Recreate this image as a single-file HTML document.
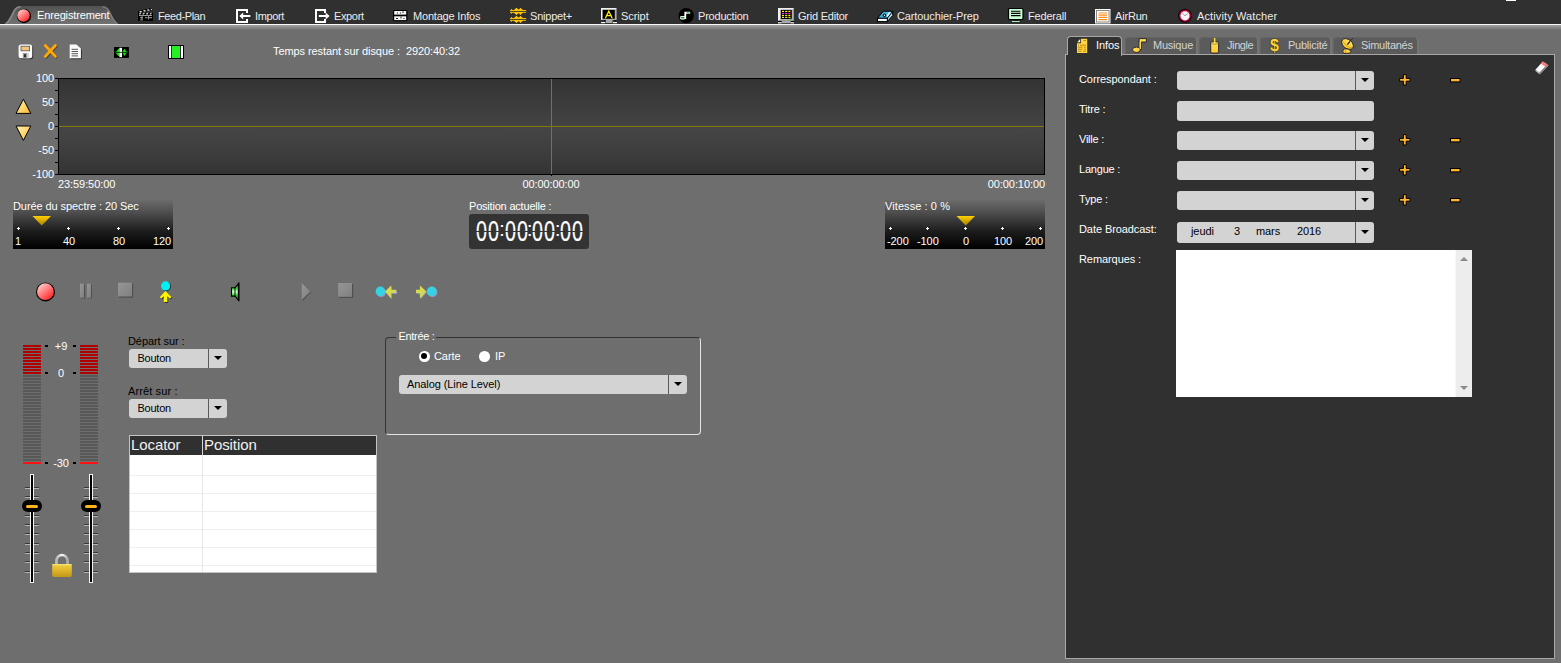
<!DOCTYPE html>
<html lang="fr">
<head>
<meta charset="utf-8">
<title>Enregistrement</title>
<style>
*{box-sizing:border-box;margin:0;padding:0}
html,body{width:1561px;height:663px;overflow:hidden}
body{letter-spacing:-.08px;background:#6e6e6e;font-family:"Liberation Sans",Arial,sans-serif;font-size:11px;color:#fff;position:relative}
.abs{position:absolute}
svg{position:absolute;overflow:visible}
.t{position:absolute;white-space:nowrap;line-height:13px;height:13px}
.k{color:#000}
.c{text-align:center}
.r{text-align:right}
#topbar{position:absolute;left:0;top:0;width:1561px;height:24px;background:#303030}
#topline{position:absolute;left:0;top:24px;width:1561px;height:1px;background:#f8f8f8}
#topshade{position:absolute;left:0;top:25px;width:1561px;height:5px;background:linear-gradient(#a4a4a4,#6e6e6e)}
.mt{position:absolute;top:10px;white-space:nowrap;line-height:13px;color:#ececec}
.cb{position:absolute;height:19px;background:#d3d3d3;border-radius:3px;color:#000}
.cb i{position:absolute;right:18px;top:0;width:1px;height:100%;background:#5a5a5a}
.cb b{position:absolute;right:5px;top:7px;width:0;height:0;border:4px solid transparent;border-top:4.5px solid #000;border-bottom:0}
.cb span{position:absolute;left:9px;top:3px;line-height:13px;white-space:nowrap}
.sl{position:absolute;width:160px;height:50px;top:199px;background:linear-gradient(#6e6e6e,#4a4a4a 30%,#1c1c1c 65%,#000)}
.dot{position:absolute;width:3px;height:3px;top:28px}
.dot:before{content:"";position:absolute;left:1px;top:0;width:1px;height:3px;background:#fff}
.dot:after{content:"";position:absolute;left:0;top:1px;width:3px;height:1px;background:#fff}
.sl .t{top:36px}
.dg{-webkit-text-stroke:.2px #fff;position:absolute;top:214.800px;font-size:29px;line-height:32px;letter-spacing:1.550px;transform-origin:0 0;transform:scaleX(.68)}
.cl{position:absolute;top:214.600px;font-size:21px;line-height:28px;letter-spacing:0}
.tk{position:absolute;background:#000;height:1px}
.vu{position:absolute;width:18px;top:345px;height:30px;background:repeating-linear-gradient(#b00000 0,#b00000 2px,#6e6e6e 2px,#6e6e6e 3px)}
.vg{position:absolute;width:18px;top:375px;height:87px;background:repeating-linear-gradient(#585858 0,#585858 2px,#6e6e6e 2px,#6e6e6e 3px)}
.vr{position:absolute;width:18px;top:462px;height:2px;background:#ff1010}
.sq{position:absolute;width:3px;height:2px;background:#000}
.ftr{position:absolute;width:4px;top:474px;height:109px;background:#000;border:1px solid #f4f4f4}
.ftk{position:absolute;width:14px;height:2px;background:linear-gradient(#383838 50%,#b4b4b4 50%)}
.knob{position:absolute;width:20px;height:12px;top:500px;border-radius:6px;background:#000}
.knob:after{content:"";position:absolute;left:4px;top:5px;width:12px;height:3px;border-radius:1.500px;background:#ffb420}
#tbl{position:absolute;left:129px;top:435px;width:248px;height:138px;background:#fff;border:1px solid #c4c4c4}
#tbl .h{position:absolute;left:0;top:0;width:246px;height:19px;background:#303030}
#tbl .ln{position:absolute;left:0;width:246px;height:1px;background:#eeeeee}
.pt{position:absolute;top:37px;height:18px;background:#5b5b5b;border-radius:4px 4px 0 0;box-shadow:inset 1px 1px 0 #646464,2px 0 0 #747474}
.lb{position:absolute;left:1079px;white-space:nowrap;line-height:13px}
.pm{position:absolute;font-weight:bold}
</style>
</head>
<body>
<div id="topbar"></div>
<div id="topline"></div>
<div id="topshade"></div>
<div class="abs" style="left:1506px;top:0;width:10px;height:1px;background:#fff"></div>

<!-- MAIN TABS -->
<svg style="left:4px;top:6px" width="115" height="18" viewBox="0 0 115 18"><defs><linearGradient id="tg" x1="0" y1="0" x2="0" y2="1"><stop offset="0" stop-color="#525252"/><stop offset="1" stop-color="#727272"/></linearGradient></defs><path d="M0 18 C4 17 6 11 9 5 Q11.500 0 16.500 0 L98.500 0 Q103.500 0 106 5 C109 11 111 17 115 18 Z" fill="url(#tg)"/><path d="M1.500 17.500 C5 16.500 7 11 10 5.500 Q12 1.200 16.500 .8" fill="none" stroke="#9a9a9a" stroke-width="1.600" opacity=".75"/><path d="M113.500 17.500 C110 16.500 108 11 105 5.500 Q103 1.200 98.500 .8" fill="none" stroke="#8c8c8c" stroke-width="1.600" opacity=".6"/></svg>
<svg style="left:14px;top:6px" width="20" height="20" viewBox="0 0 20 20"><defs><linearGradient id="rg" x1=".15" y1=".1" x2=".85" y2=".95"><stop offset="0" stop-color="#ffc8c8"/><stop offset=".5" stop-color="#ff7474"/><stop offset="1" stop-color="#ff2020"/></linearGradient></defs><circle cx="10" cy="10" r="7.2" fill="#000"/><circle cx="9.5" cy="9.5" r="6.2" fill="url(#rg)"/></svg>
<div class="mt" style="left:37px;top:9px;color:#fff;letter-spacing:-0.15px">Enregistrement</div>

<!-- feed-plan clapper -->
<svg style="left:138px;top:8px" width="16" height="14" viewBox="0 0 16 14"><rect x="0" y="4.500" width="15" height="8.500" fill="#000"/><path d="M0 4.800 L0 3 L13.600 0 L14.600 2 L1 4.800Z" fill="#000"/><path d="M1.200 3.300 L3.200 2.900 L4.200 4 L2.200 4.400Z M5 2.500 L7 2.100 L8 3.200 L6 3.600Z M8.800 1.700 L10.800 1.300 L11.800 2.400 L9.800 2.800Z M12.400 .9 L13.600 .7 L14.100 1.800 L13.200 2Z" fill="#f4f4f4"/><path d="M1.600 4.800 H3.400 L2.400 6.600 H.8Z M5.200 4.800 H7 L6 6.600 H4.200Z M8.800 4.800 H10.600 L9.600 6.600 H7.800Z M12.400 4.800 H14 L13 6.600 H11.400Z" fill="#c8c8c8"/><rect x="1" y="7" width="13" height="1" fill="#9a9a9a"/><rect x="2" y="9.200" width="3" height="1" fill="#aaa"/><rect x="7" y="9.200" width="2.500" height="1" fill="#aaa"/><rect x="11" y="9.200" width="3" height="1" fill="#aaa"/><rect x="3.500" y="7" width="1" height="5" fill="#909090"/><rect x="10" y="7" width="1" height="4.500" fill="#909090"/><rect x="2" y="11.400" width="3" height="1" fill="#888"/></svg>
<div class="mt" style="left:158px;letter-spacing:-0.4px">Feed-Plan</div>
<!-- import -->
<svg style="left:236px;top:9px" width="15" height="14" viewBox="0 0 15 14"><path d="M11 4 V1 H1 V13 H11 V10" fill="none" stroke="#fff" stroke-width="2"/><path d="M3.3 7 L7.2 3.6 V5.9 H14.3 V8.1 H7.2 V10.4Z" fill="#fff"/></svg>
<div class="mt" style="left:255px;letter-spacing:-0.36px">Import</div>
<!-- export -->
<svg style="left:315px;top:9px" width="15" height="14" viewBox="0 0 15 14"><path d="M10 4 V1 H1 V13 H10 V10" fill="none" stroke="#fff" stroke-width="2"/><path d="M14.6 7 L10.7 3.6 V5.9 H3.8 V8.1 H10.7 V10.4Z" fill="#fff"/></svg>
<div class="mt" style="left:334px;letter-spacing:-0.36px">Export</div>
<!-- montage infos -->
<svg style="left:393px;top:10px" width="15" height="12" viewBox="0 0 15 12"><rect x="0" y="0" width="14.5" height="11.2" rx="1.5" fill="#000"/><rect x="1.200" y="1" width="12" height="3.600" fill="#f4f4f4"/><rect x="1.200" y="6.300" width="12" height="3.800" fill="#f4f4f4"/><path d="M4 2.5h1v1H4z M7 2.5h1v1H7z M9.5 1.3h1v1.6h-1z M3 8h2v1H3z M7.5 6.6h1v2h-1z M10.5 8h1v1h-1z" fill="#222"/></svg>
<div class="mt" style="left:413px;letter-spacing:-0.19px">Montage Infos</div>
<!-- snippet+ -->
<svg style="left:510px;top:8px" width="17" height="16" viewBox="0 0 17 16"><path d="M0.0 2.0 L0.8 2.0 L1.5 0.8 L2.3 2.0 L4.0 2.0 L5.0 1.0 L6.5 -0.2 L8.0 1.2 L9.0 1.6 L10.5 -0.2 L12.0 1.2 L13.0 2.0 L16.1 2.0 L16.1 4.8 L13.0 4.8 L12.0 5.6 L10.5 7.0 L9.0 5.2 L8.0 5.6 L6.5 7.0 L5.0 5.8 L4.0 4.8 L2.3 4.8 L1.5 6.0 L0.8 4.8 L0.0 4.8Z" fill="#ffc800"/><rect x="0" y="2.95" width="16.100" height=".9" fill="#3a3420"/><path d="M0.0 10.0 L0.8 10.0 L1.5 8.8 L2.3 10.0 L4.0 10.0 L5.0 9.0 L6.5 7.8 L8.0 9.2 L9.0 9.6 L10.5 7.8 L12.0 9.2 L13.0 10.0 L16.1 10.0 L16.1 12.8 L13.0 12.8 L12.0 13.6 L10.5 15.0 L9.0 13.2 L8.0 13.6 L6.5 15.0 L5.0 13.8 L4.0 12.8 L2.3 12.8 L1.5 14.0 L0.8 12.8 L0.0 12.8Z" fill="#ffc800"/><rect x="0" y="10.95" width="16.100" height=".9" fill="#3a3420"/></svg>
<div class="mt" style="left:530px;letter-spacing:-0.21px">Snippet+</div>
<!-- script -->
<svg style="left:601px;top:8px" width="16" height="16" viewBox="0 0 16 16"><rect x="0" y="0" width="15.600" height="12" fill="#b0b0b0"/><path d="M0 0 H15.600 L13.800 1.800 H1.600 V10.800 L0 12Z" fill="#f2f2f2"/><rect x="1.600" y="1.800" width="12.200" height="9" fill="#000"/><path d="M4.600 9.800 L7.800 3.200 L11 9.800 M5.400 7.700 H10.200" fill="none" stroke="#ffee00" stroke-width="1.300" stroke-linecap="round"/><rect x="4.500" y="12" width="7" height="3" fill="#a8a8a8"/><rect x="0" y="14" width="4" height="1.200" fill="#f4f4f4"/><rect x="12" y="14" width="4" height="1.200" fill="#f4f4f4"/><rect x="3" y="12.400" width="2" height="1" fill="#000"/><rect x="13.500" y="12.400" width="2" height="1" fill="#000"/></svg>
<div class="mt" style="left:621px;letter-spacing:-0.08px">Script</div>
<!-- production -->
<svg style="left:678px;top:8px" width="16" height="16" viewBox="0 0 16 16"><circle cx="8.200" cy="7.700" r="7.600" fill="#000"/><path d="M6.400 3.800 H12.200 V5.800 H8.200 V11 H6.400Z" fill="#fff"/><rect x="2.200" y="8" width="5" height="3.400" rx="1" fill="#fff"/><rect x="3" y="8.900" width="3.400" height="1.500" fill="#00a030"/><rect x="8.600" y="4.300" width="3" height="1" fill="#00a030"/></svg>
<div class="mt" style="left:698px;letter-spacing:-0.21px">Production</div>
<!-- grid editor -->
<svg style="left:778px;top:8px" width="16" height="16" viewBox="0 0 16 16"><rect x="0" y="0" width="15.800" height="12.800" fill="#b0b0b0"/><path d="M0 0 H15.800 L13.800 2 H2.500 V11 L0 12.800Z" fill="#f0f0f0"/><rect x="2.800" y="1.800" width="11" height="9.200" fill="#000"/><g fill="#ffee00"><rect x="4" y="2.800" width="2" height="1.200"/><rect x="7.200" y="2.800" width="2" height="1.200"/><rect x="10.400" y="2.800" width="2" height="1.200"/><rect x="4" y="6.800" width="2" height="1.200"/><rect x="7.200" y="6.800" width="2" height="1.200"/><rect x="10.400" y="6.800" width="2" height="1.200"/><rect x="4" y="8.800" width="2" height="1.200"/><rect x="7.200" y="8.800" width="2" height="1.200"/><rect x="10.400" y="8.800" width="2" height="1.200"/></g><g fill="#ff20e0"><rect x="4" y="4.800" width="2" height="1.200"/><rect x="7.200" y="4.800" width="2" height="1.200"/><rect x="10.400" y="4.800" width="2" height="1.200"/></g><rect x="11.500" y="10.600" width="2" height="1" fill="#00d040"/><rect x="3.500" y="12.800" width="9" height="2.400" fill="#a8a8a8"/><rect x="0" y="14.200" width="3.500" height="1.200" fill="#f4f4f4"/><rect x="12.500" y="14.200" width="3.500" height="1.200" fill="#f4f4f4"/><rect x="0.500" y="13" width="3" height="1" fill="#000"/><rect x="13" y="13" width="3" height="1" fill="#000"/></svg>
<div class="mt" style="left:798px;letter-spacing:-0.23px">Grid Editor</div>
<!-- cartouchier -->
<svg style="left:877px;top:10px" width="17" height="13" viewBox="0 0 17 13"><path d="M6.300 1.200 H15.700 L10.300 8.300 H.5Z" fill="#38b0e0" stroke="#000" stroke-width="1"/><path d="M10.300 8.300 L15.700 1.200 V5.500 L10.300 11.600Z" fill="#a8e0f8" stroke="#000" stroke-width="1"/><rect x=".5" y="8.300" width="9.800" height="3.300" fill="#f4faff" stroke="#000" stroke-width="1"/><path d="M11.800 2.200 L14.300 2.200 L10.500 7 L9.200 6Z" fill="#e8f6ff"/><circle cx="7.500" cy="5.300" r="1.700" fill="#000"/><circle cx="7.500" cy="5.300" r=".8" fill="#fff"/></svg>
<div class="mt" style="left:897px;letter-spacing:-0.12px">Cartouchier-Prep</div>
<!-- federall -->
<svg style="left:1008px;top:8px" width="16" height="15" viewBox="0 0 16 15"><rect x=".5" y=".5" width="14.500" height="11" rx="1" fill="#c8ffd4" stroke="#000" stroke-width="1.200"/><path d="M3 3.200 H12.500 M3 5.400 H12.500 M3 7.600 H12.500" stroke="#000" stroke-width="1.100"/><rect x="5.500" y="11.500" width="4.500" height="1.500" fill="#000"/><rect x="3.500" y="12.800" width="8.500" height="1.400" fill="#c8ffd4" stroke="#000" stroke-width=".5"/></svg>
<div class="mt" style="left:1028px;letter-spacing:-0.18px">Federall</div>
<!-- airrun -->
<svg style="left:1095px;top:9px" width="16" height="15" viewBox="0 0 16 15"><rect x="0" y="0" width="15.500" height="14.500" fill="#fafafa"/><rect x="1.500" y="1.500" width="12.500" height="11.500" fill="#fff" stroke="#888" stroke-width="1"/><path d="M3.500 4 H12 M3.500 6.200 H12 M3.500 8.400 H12 M3.500 10.600 H12" stroke="#ff8a10" stroke-width="1.200"/></svg>
<div class="mt" style="left:1115px;letter-spacing:-0.18px">AirRun</div>
<!-- activity watcher -->
<svg style="left:1177px;top:8px" width="16" height="16" viewBox="0 0 16 16"><circle cx="8" cy="7.800" r="7" fill="#100008"/><circle cx="8" cy="7.800" r="6" fill="#b8003c"/><circle cx="8" cy="7.800" r="4.600" fill="#f6f6f6"/><path d="M5.200 5 L8 7.800 L10.800 5.500" fill="none" stroke="#999" stroke-width="1"/></svg>
<div class="mt" style="left:1197px;letter-spacing:0.12px">Activity Watcher</div>

<!-- TOOLBAR -->
<!-- save -->
<svg style="left:18px;top:44px" width="16" height="16" viewBox="0 0 16 16"><rect x="1.600" y="1.600" width="13.600" height="13.600" rx="2.500" fill="#2a2a2a" opacity=".85"/><rect x=".6" y=".6" width="13.600" height="13.600" rx="2.500" fill="#fcfcfc"/><rect x="3" y="2.200" width="8.600" height="4.600" fill="#f2c47c" stroke="#555" stroke-width=".8"/><rect x="4.800" y="9" width="6" height="5.200" fill="#9a9a9a"/><rect x="6.200" y="10.300" width="1.600" height="2.800" fill="#111"/><rect x="9" y="9" width="1.800" height="5.200" fill="#d8d8d8"/></svg>
<!-- X -->
<svg style="left:43px;top:43px" width="16" height="16" viewBox="0 0 16 16"><path d="M3.100 3.300 L13.200 14.200 M13.200 3.300 L3.100 14.200" stroke="#3a3a3a" stroke-width="2.800" stroke-linecap="round" opacity=".75"/><path d="M2.300 2.500 L12.400 13.400 M12.400 2.500 L2.300 13.400" stroke="#ffaa00" stroke-width="2.800" stroke-linecap="round"/></svg>
<!-- doc -->
<svg style="left:69px;top:44px" width="14" height="16" viewBox="0 0 14 16"><path d="M1.700 1.600 H8.500 L12.900 5.600 V15.200 H1.700Z" fill="#2a2a2a" opacity=".85"/><path d="M.7 .6 H7.500 L11.900 4.600 V14.200 H.7Z" fill="#fcfcfc"/><path d="M2.600 5.300 H9 M2.600 7.500 H9 M2.600 9.700 H9 M2.600 11.900 H9" stroke="#555" stroke-width="1"/></svg>
<!-- green arrows -->
<svg style="left:114px;top:47px" width="15" height="11" viewBox="0 0 15 11"><rect x="0" y="0" width="14.900" height="10.900" fill="#000"/><path d="M.6 5.300 L2.500 4.300 L4.400 1.800 L5.400 1.800 V9 L4.400 9 L2.500 6.400Z" fill="#1ee01e"/><path d="M8 5.300 L9 4 L10.500 1.800 L12 4 L14.200 5.300 L12 6.600 L10.500 9 L9 6.600Z" fill="#1ee01e"/><rect x="5.400" y=".8" width="2.600" height="9.300" fill="#fff"/><rect x=".3" y="4.900" width="14.300" height=".9" fill="#000" opacity=".85"/></svg>
<!-- green rect -->
<svg style="left:168px;top:45px" width="16" height="14" viewBox="0 0 16 14"><rect x="0" y="0" width="16" height="14" rx=".8" fill="#000"/><rect x="1" y="1" width="2.200" height="12" fill="#fff"/><rect x="12.800" y="1" width="2.200" height="12" fill="#fff"/><rect x="4" y="1" width="8" height="12" fill="#22f022"/></svg>
<div class="t" style="left:273px;top:45px">Temps restant sur disque :&nbsp; 2920:40:32</div>

<!-- up/down triangles -->
<svg style="left:15px;top:98px" width="18" height="44" viewBox="0 0 18 44"><defs><linearGradient id="yg" x1="0" y1="0" x2="1" y2="1"><stop offset="0" stop-color="#fff0b8"/><stop offset=".5" stop-color="#ffd870"/><stop offset="1" stop-color="#ffb830"/></linearGradient></defs><path d="M8.400 1.200 L15.800 15.400 H1Z" fill="url(#yg)" stroke="#000" stroke-width="1"/><path d="M1 28 H15.800 L8.400 42.400Z" fill="url(#yg)" stroke="#000" stroke-width="1"/></svg>

<!-- WAVEFORM -->
<div class="abs" style="left:58px;top:78px;width:987px;height:97px;border:1px solid #000;background:linear-gradient(#333,#3a3a3a 20%,#454545 55%,#3c3c3c 80%,#333)"></div>
<div class="abs" style="left:59px;top:126px;width:985px;height:1px;background:#857a00"></div>
<div class="abs" style="left:551px;top:79px;width:1px;height:95px;background:#857a00"></div>
<div class="abs" style="left:551px;top:175px;width:1px;height:1px;background:#000"></div>
<div class="t r" style="left:14px;width:40px;top:72px">100</div>
<div class="t r" style="left:14px;width:40px;top:96px">50</div>
<div class="t r" style="left:14px;width:40px;top:120px">0</div>
<div class="t r" style="left:14px;width:40px;top:144px">-50</div>
<div class="t r" style="left:14px;width:40px;top:168px">-100</div>
<div class="tk" style="left:55px;top:78px;width:3px"></div>
<div class="tk" style="left:55px;top:90px;width:3px"></div>
<div class="tk" style="left:55px;top:102px;width:3px"></div>
<div class="tk" style="left:55px;top:114px;width:3px"></div>
<div class="tk" style="left:55px;top:126px;width:3px"></div>
<div class="tk" style="left:55px;top:138px;width:3px"></div>
<div class="tk" style="left:55px;top:150px;width:3px"></div>
<div class="tk" style="left:55px;top:162px;width:3px"></div>
<div class="tk" style="left:55px;top:174px;width:3px"></div>
<div class="t" style="left:58px;top:178px">23:59:50:00</div>
<div class="t c" style="left:501px;width:100px;top:178px">00:00:00:00</div>
<div class="t r" style="left:945px;width:100px;top:178px">00:00:10:00</div>

<!-- spectrum slider -->
<div class="sl" style="left:13px">
<div class="t" style="left:0;top:1px">Durée du spectre : 20 Sec</div>
<svg style="left:19px;top:17px" width="20" height="10" viewBox="0 0 20 10"><defs><linearGradient id="gg" x1="0" y1="0" x2="0" y2="1"><stop offset="0" stop-color="#ffd000"/><stop offset="1" stop-color="#a88000"/></linearGradient></defs><path d="M.5 0 H19 L9.700 9.600Z" fill="url(#gg)"/></svg>
<div class="dot" style="left:4px"></div><div class="dot" style="left:54px"></div><div class="dot" style="left:104px"></div><div class="dot" style="left:154px"></div>
<div class="t c" style="left:-5px;width:20px">1</div>
<div class="t c" style="left:41px;width:30px">40</div>
<div class="t c" style="left:91px;width:30px">80</div>
<div class="t r" style="left:118px;width:40px">120</div>
</div>

<!-- position -->
<div class="t" style="left:469px;top:200px;letter-spacing:-.2px">Position actuelle :</div>
<div class="abs" style="left:469px;top:214px;width:120px;height:35px;background:#333;border-radius:3px"></div>
<div class="abs" id="lcd" style="left:0;top:0;width:0;height:0;color:#fff;white-space:nowrap"><span class="dg" style="left:476.400px">00</span><span class="cl" style="left:498.900px">:</span><span class="dg" style="left:504.500px">00</span><span class="cl" style="left:526.700px">:</span><span class="dg" style="left:532.300px">00</span><span class="cl" style="left:554.700px">:</span><span class="dg" style="left:560.200px">00</span></div>
<div class="abs" style="left:474px;top:231px;width:112px;height:1px;background:#333"></div>

<!-- vitesse slider -->
<div class="sl" style="left:885px">
<div class="t" style="left:0;top:1px;letter-spacing:.08px">Vitesse : 0 %</div>
<svg style="left:71px;top:17px" width="20" height="10" viewBox="0 0 20 10"><path d="M.5 0 H19 L9.700 9.600Z" fill="url(#gg)"/></svg>
<div class="dot" style="left:4px"></div><div class="dot" style="left:41px"></div><div class="dot" style="left:79px"></div><div class="dot" style="left:116px"></div><div class="dot" style="left:154px"></div>
<div class="t" style="left:2px">-200</div>
<div class="t" style="left:32px">-100</div>
<div class="t c" style="left:66px;width:30px">0</div>
<div class="t" style="left:109px">100</div>
<div class="t" style="left:140px">200</div>
</div>

<!-- TRANSPORT -->
<svg style="left:35px;top:281px" width="22" height="22" viewBox="0 0 22 22"><circle cx="10.500" cy="10.900" r="9.500" fill="#000"/><circle cx="10.400" cy="10.700" r="8.400" fill="url(#rg)"/></svg>
<svg style="left:79px;top:283px" width="14" height="16" viewBox="0 0 14 16"><defs><linearGradient id="dg" x1="0" y1="0" x2="1" y2="1"><stop offset="0" stop-color="#969696"/><stop offset="1" stop-color="#808080"/></linearGradient></defs><rect x="1.800" y="1.500" width="4.200" height="14" fill="#505050"/><rect x="8.800" y="1.500" width="4.200" height="14" fill="#505050"/><rect x="1" y=".7" width="4" height="14" fill="url(#dg)"/><rect x="8" y=".7" width="4" height="14" fill="url(#dg)"/></svg>
<svg style="left:117px;top:282px" width="17" height="16" viewBox="0 0 17 16"><rect x="1.800" y="1.500" width="14.400" height="14.200" fill="#505050"/><rect x="1" y=".7" width="14" height="13.800" fill="url(#dg)"/></svg>
<!-- person -->
<svg style="left:158px;top:281px" width="16" height="23" viewBox="0 0 16 23"><circle cx="8.300" cy="5.600" r="4.600" fill="#000" opacity=".8"/><path d="M8.200 10.700 L14.200 16.700 L12.700 18.500 L10.100 15.900 V21.700 H6.500 V15.900 L3.900 18.500 L2.600 16.700Z" fill="#000" opacity=".7"/><circle cx="7.600" cy="4.900" r="4.600" fill="#00f0f4"/><path d="M7.500 10 L13.500 16 L12 17.800 L9.400 15.200 V21 H5.800 V15.200 L3.200 17.800 L1.900 16Z" fill="#fff400"/></svg>
<!-- speaker -->
<svg style="left:230px;top:282px" width="10" height="20" viewBox="0 0 10 20"><defs><linearGradient id="sg" x1="0" y1="0" x2="0" y2="1"><stop offset="0" stop-color="#088808"/><stop offset=".3" stop-color="#38d838"/><stop offset=".5" stop-color="#d8ffd8"/><stop offset=".7" stop-color="#30d030"/><stop offset="1" stop-color="#088808"/></linearGradient></defs><path d="M1.500 5.700 H5 L8.700 1.500 V18.300 L5 14.100 H1.500Z" fill="url(#sg)" stroke="#000" stroke-width="1.100" stroke-linejoin="miter"/><path d="M5 5.700 V14.100" stroke="#000" stroke-width=".9"/><path d="M8.600 .7 V19.100" stroke="#000" stroke-width="1.500"/></svg>
<!-- play disabled -->
<svg style="left:301px;top:282px" width="12" height="20" viewBox="0 0 12 20"><path d="M1.600 1.800 L10.400 10 L1.600 19Z" fill="#505050"/><path d="M.8 1 L9.600 9.400 L.8 17.800Z" fill="url(#dg)"/></svg>
<svg style="left:337px;top:282px" width="17" height="16" viewBox="0 0 17 16"><rect x="2" y="1.800" width="14.200" height="14.200" fill="#505050"/><rect x="1.200" y="1" width="13.800" height="13.800" fill="url(#dg)"/></svg>
<!-- cue left -->
<svg style="left:374px;top:283px" width="24" height="17" viewBox="0 0 24 17"><circle cx="7.200" cy="9.300" r="4.800" fill="#9494c4"/><path d="M11.800 9.200 L17.900 3.300 V7.500 H23 V10.900 H17.900 V16.200Z" fill="#9494c4"/><circle cx="6.400" cy="8.400" r="4.800" fill="#34d2e2"/><path d="M11 8.400 L17.100 2.500 V6.700 H22.200 V10.100 H17.100 V15.400Z" fill="#d6da52"/></svg>
<!-- cue right -->
<svg style="left:414px;top:283px" width="24" height="17" viewBox="0 0 24 17"><circle cx="18.500" cy="9.300" r="4.900" fill="#9494c4"/><path d="M13 9.200 L6.700 3.300 V7.500 H2.800 V10.900 H6.700 V16.200Z" fill="#9494c4"/><circle cx="17.700" cy="8.400" r="4.900" fill="#34d2e2"/><path d="M12.200 8.400 L5.900 2.500 V6.700 H2 V10.100 H5.900 V15.400Z" fill="#d6da52"/></svg>

<!-- VU METERS -->
<div class="vu" style="left:23px"></div><div class="vg" style="left:23px"></div><div class="vr" style="left:23px"></div>
<div class="vu" style="left:80px"></div><div class="vg" style="left:80px"></div><div class="vr" style="left:80px"></div>
<div class="sq" style="left:45px;top:345px"></div><div class="sq" style="left:73px;top:345px"></div>
<div class="sq" style="left:45px;top:372px"></div><div class="sq" style="left:73px;top:372px"></div>
<div class="sq" style="left:45px;top:462px"></div><div class="sq" style="left:73px;top:462px"></div>
<div class="t c" style="left:45px;width:32px;top:340px">+9</div>
<div class="t c" style="left:45px;width:32px;top:367px">0</div>
<div class="t c" style="left:45px;width:32px;top:457px">-30</div>
<!-- FADERS -->
<div class="ftk" style="left:25px;top:487px"></div>
<div class="ftk" style="left:25px;top:496px"></div>
<div class="ftk" style="left:25px;top:506px"></div>
<div class="ftk" style="left:25px;top:515px"></div>
<div class="ftk" style="left:25px;top:524px"></div>
<div class="ftk" style="left:25px;top:533px"></div>
<div class="ftk" style="left:25px;top:543px"></div>
<div class="ftk" style="left:25px;top:552px"></div>
<div class="ftk" style="left:25px;top:561px"></div>
<div class="ftk" style="left:25px;top:571px"></div>
<div class="ftr" style="left:30px"></div>
<div class="knob" style="left:22px"></div>
<div class="ftk" style="left:84px;top:487px"></div>
<div class="ftk" style="left:84px;top:496px"></div>
<div class="ftk" style="left:84px;top:506px"></div>
<div class="ftk" style="left:84px;top:515px"></div>
<div class="ftk" style="left:84px;top:524px"></div>
<div class="ftk" style="left:84px;top:533px"></div>
<div class="ftk" style="left:84px;top:543px"></div>
<div class="ftk" style="left:84px;top:552px"></div>
<div class="ftk" style="left:84px;top:561px"></div>
<div class="ftk" style="left:84px;top:571px"></div>
<div class="ftr" style="left:89px"></div>
<div class="knob" style="left:81px"></div>
<!-- lock -->
<svg style="left:51px;top:553px" width="22" height="26" viewBox="0 0 22 26"><defs><linearGradient id="lk" x1="0" y1="0" x2="0" y2="1"><stop offset="0" stop-color="#f0d048"/><stop offset=".5" stop-color="#e0b428"/><stop offset="1" stop-color="#c09818"/></linearGradient><linearGradient id="sh" x1="0" y1="0" x2="1" y2="0"><stop offset="0" stop-color="#b8b8b8"/><stop offset=".5" stop-color="#fafafa"/><stop offset="1" stop-color="#a8a8a8"/></linearGradient></defs><path d="M5.400 12 V7.600 A5.600 5.600 0 0 1 16.600 7.600 V12" fill="none" stroke="url(#sh)" stroke-width="2.600"/><rect x="1.200" y="11" width="19.600" height="13" rx="1.800" fill="url(#lk)"/><rect x="1.200" y="11" width="19.600" height="1.200" rx=".6" fill="#f8e070"/></svg>

<!-- COMBOS LEFT -->
<div class="t k" style="left:128px;top:335px">Départ sur :</div>
<div class="cb" style="left:129px;top:349px;width:98px"><span style="left:8.500px;letter-spacing:-.25px">Bouton</span><i></i><b></b></div>
<div class="t k" style="left:128px;top:385px;letter-spacing:.12px">Arrêt sur :</div>
<div class="cb" style="left:129px;top:399px;width:98px"><span style="left:8.500px;letter-spacing:-.25px">Bouton</span><i></i><b></b></div>

<!-- TABLE -->
<div id="tbl">
<div class="h"></div>
<div class="abs" style="left:72px;top:0;width:1px;height:19px;background:#d8d8d8"></div>
<div class="abs" style="left:72px;top:19px;width:1px;height:117px;background:#e8e8e8"></div>
<div class="t" style="left:1px;top:-1px;font-size:15px;line-height:19px;height:19px;color:#f0f0f0">Locator</div>
<div class="t" style="left:74px;top:-1px;font-size:15px;line-height:19px;height:19px;color:#f0f0f0">Position</div>

<div class="ln" style="top:39px"></div>
<div class="ln" style="top:57px"></div>
<div class="ln" style="top:75px"></div>
<div class="ln" style="top:93px"></div>
<div class="ln" style="top:111px"></div>
<div class="ln" style="top:129px"></div>
</div>

<!-- ENTREE GROUP -->
<div class="abs" style="left:385px;top:337px;width:316px;height:98px;border-radius:4px;border:1px solid #e4e4e4;border-top-color:#333;border-left-color:#333"></div>
<div class="abs" style="left:396px;top:334px;width:40px;height:8px;background:#6e6e6e"></div>
<div class="t" style="left:398.500px;top:330px;letter-spacing:-.3px">Entrée :</div>
<div class="abs" style="left:419px;top:351px;width:10.500px;height:10.500px;border-radius:50%;background:#fff"></div>
<div class="abs" style="left:421.200px;top:353.200px;width:6px;height:6px;border-radius:50%;background:#000"></div>
<div class="t" style="left:434px;top:350px">Carte</div>
<div class="abs" style="left:479px;top:351px;width:10.500px;height:10.500px;border-radius:50%;background:#fff"></div>
<div class="t" style="left:495px;top:350px">IP</div>
<div class="cb" style="left:399px;top:375px;width:288px"><span style="left:8px">Analog (Line Level)</span><i></i><b></b></div>

<!-- RIGHT PANEL -->
<div class="pt" style="left:1125px;width:71px"></div>
<div class="pt" style="left:1199px;width:58px"></div>
<div class="pt" style="left:1260px;width:70px"></div>
<div class="pt" style="left:1333px;width:84px"></div>
<div class="abs" style="left:1065px;top:54px;width:490px;height:605px;background:#303030;border:1px solid #a8a8a8"></div>
<div class="abs" style="left:1067px;top:36px;width:55px;height:20px;background:#303030;border:1px solid #a8a8a8;border-bottom:0;border-radius:4px 4px 0 0"></div>
<div class="abs" style="left:1066px;top:55px;width:2px;height:2px;background:#303030"></div>
<!-- tab icons -->
<svg style="left:1076px;top:39px" width="12" height="15" viewBox="0 0 12 15"><path d="M5 -.3 H11.200 V14.100 H1 V4.200 H5Z" fill="#ffd546"/><path d="M1.200 3.200 H4.200 V0Z" fill="#fff2b4"/><path d="M7.500 1.500 H10 M2 6.200 H3 M4 6.200 H10 M2 8.200 H6.500 M8 8.200 H10 M2 10.200 H6.500 M8 10.200 H10 M2 12.200 H5.500 M7 12.200 H10" stroke="#c08800" stroke-width="1"/></svg>
<div class="t" style="left:1096px;top:39px">Infos</div>
<svg style="left:1132px;top:38px" width="15" height="15" viewBox="0 0 15 15"><defs><linearGradient id="yy" x1="0" y1="0" x2="0" y2="1"><stop offset="0" stop-color="#ffe060"/><stop offset="1" stop-color="#ffc828"/></linearGradient></defs><path d="M7.100 .6 H14.400 V4 H9.300 V11.500 H7.100Z" fill="url(#yy)" stroke="#1c1c30" stroke-width=".9" stroke-linejoin="round"/><ellipse cx="4.400" cy="11.800" rx="3.900" ry="2.700" fill="url(#yy)" stroke="#1c1c30" stroke-width=".9"/><rect x="7.600" y="4" width="1.300" height="7" fill="#ffd640"/></svg>
<div class="t" style="left:1153px;top:39px;color:#d4d4d4;letter-spacing:-0.22px">Musique</div>
<svg style="left:1210px;top:38px" width="10" height="16" viewBox="0 0 10 16"><rect x=".7" y="3.700" width="7.900" height="11.400" rx="1.600" fill="url(#yy)" stroke="#1c1c30" stroke-width=".9"/><ellipse cx="4.650" cy="5" rx="3.500" ry="1.100" fill="#ffe878" stroke="#6a5810" stroke-width=".6"/><rect x="3.900" y="0" width="1.500" height="5.300" fill="#ffd83c"/></svg>
<div class="t" style="left:1227px;top:39px;color:#d4d4d4;letter-spacing:-0.4px">Jingle</div>
<div class="t" style="left:1270px;top:37px;font-size:16px;font-weight:bold;line-height:17px;height:17px;color:#ffd23c;text-shadow:0 0 1px #2a2000,0 0 1px #2a2000">$</div>
<div class="t" style="left:1288px;top:39px;color:#d4d4d4;letter-spacing:-0.24px">Publicité</div>
<svg style="left:1341px;top:38px" width="14" height="16" viewBox="0 0 14 16"><ellipse cx="6.500" cy="6" rx="6.600" ry="4.500" transform="rotate(38 6.5 6)" fill="url(#yy)" stroke="#1c1c30" stroke-width=".9"/><path d="M2 3.500 Q5.500 9.500 11.500 9.800" fill="none" stroke="#c89810" stroke-width=".8"/><path d="M6.400 6.600 L9 3.400" stroke="#1c1c30" stroke-width="1.300"/><path d="M9 3.400 L11.800 0" stroke="#1c1c30" stroke-width=".8"/><path d="M3.600 10.800 L1.600 13.200 L2.800 15.300 H8.600 L9.800 13.600 L8 11.200Z" fill="url(#yy)" stroke="#1c1c30" stroke-width=".8" stroke-linejoin="round"/><path d="M4.400 11.500 V15" stroke="#c89810" stroke-width=".7"/></svg>
<div class="t" style="left:1361px;top:39px;color:#d4d4d4;letter-spacing:-0.28px">Simultanés</div>
<!-- eraser -->
<svg style="left:1534px;top:60px" width="17" height="17" viewBox="0 0 17 17"><path d="M9 1.300 L15.800 5.800 L6 15.400 L1.300 10Z" fill="#1a1a1a"/><path d="M8.800 1.400 L13.500 4.600 L5.600 12.800 L1.400 9.800Z" fill="#fdfdfd"/><path d="M8.800 1.400 L13.500 4.600 L11.400 6.800 L6.800 3.500Z" fill="#ff7878"/><path d="M1.400 9.800 L5.600 12.800 L6 14.800 L1.500 11Z" fill="#c8c8c8"/><path d="M5.600 12.800 L13.500 4.600 L15 5.600 L6 14.800Z" fill="#888"/></svg>
<!-- form -->
<div class="lb" style="top:73px">Correspondant :</div>
<div class="lb" style="top:103px;letter-spacing:-0.2px">Titre :</div>
<div class="lb" style="top:133px;letter-spacing:-0.25px">Ville :</div>
<div class="lb" style="top:163px;letter-spacing:-0.2px">Langue :</div>
<div class="lb" style="top:193px;letter-spacing:-0.2px">Type :</div>
<div class="lb" style="top:223px">Date Broadcast:</div>
<div class="lb" style="top:253px">Remarques :</div>
<div class="cb" style="left:1177px;top:71px;width:197px"><i></i><b></b></div>
<div class="cb" style="left:1177px;top:101px;width:197px;height:20px"></div>
<div class="cb" style="left:1177px;top:131px;width:197px"><i></i><b></b></div>
<div class="cb" style="left:1177px;top:161px;width:197px"><i></i><b></b></div>
<div class="cb" style="left:1177px;top:191px;width:197px"><i></i><b></b></div>
<div class="cb" style="left:1177px;top:222px;width:197px;height:21px"><span style="left:14px;top:3px">jeudi</span><span style="left:57px;top:3px">3</span><span style="left:79px;top:3px">mars</span><span style="left:120px;top:3px">2016</span><i></i><b style="top:8px"></b></div>
<!-- plus / minus -->
<svg style="left:1399px;top:74px" width="12" height="12" viewBox="0 0 12 12" id="plus0"><path d="M4.400 .6 H7.200 V4.400 H11 V7.200 H7.200 V11 H4.400 V7.200 H.6 V4.400 H4.400Z" fill="#ffb432" stroke="#000" stroke-width="1"/></svg>
<svg style="left:1450px;top:78px" width="11" height="5" viewBox="0 0 11 5"><rect x=".5" y=".5" width="9.600" height="3.400" fill="#ffb432" stroke="#000" stroke-width="1"/></svg>
<svg style="left:1399px;top:134px" width="12" height="12" viewBox="0 0 12 12"><path d="M4.400 .6 H7.200 V4.400 H11 V7.200 H7.200 V11 H4.400 V7.200 H.6 V4.400 H4.400Z" fill="#ffb432" stroke="#000" stroke-width="1"/></svg>
<svg style="left:1450px;top:138px" width="11" height="5" viewBox="0 0 11 5"><rect x=".5" y=".5" width="9.600" height="3.400" fill="#ffb432" stroke="#000" stroke-width="1"/></svg>
<svg style="left:1399px;top:164px" width="12" height="12" viewBox="0 0 12 12"><path d="M4.400 .6 H7.200 V4.400 H11 V7.200 H7.200 V11 H4.400 V7.200 H.6 V4.400 H4.400Z" fill="#ffb432" stroke="#000" stroke-width="1"/></svg>
<svg style="left:1450px;top:168px" width="11" height="5" viewBox="0 0 11 5"><rect x=".5" y=".5" width="9.600" height="3.400" fill="#ffb432" stroke="#000" stroke-width="1"/></svg>
<svg style="left:1399px;top:194px" width="12" height="12" viewBox="0 0 12 12"><path d="M4.400 .6 H7.200 V4.400 H11 V7.200 H7.200 V11 H4.400 V7.200 H.6 V4.400 H4.400Z" fill="#ffb432" stroke="#000" stroke-width="1"/></svg>
<svg style="left:1450px;top:198px" width="11" height="5" viewBox="0 0 11 5"><rect x=".5" y=".5" width="9.600" height="3.400" fill="#ffb432" stroke="#000" stroke-width="1"/></svg>
<!-- remarques -->
<div class="abs" style="left:1176px;top:250px;width:296px;height:147px;background:#fff"></div>
<div class="abs" style="left:1455px;top:250px;width:17px;height:147px;background:#ededed;border-left:1px solid #f8f8f8"></div>
<div class="abs" style="left:1460px;top:257px;width:0;height:0;border:4px solid transparent;border-bottom:4px solid #8a8a8a;border-top:0"></div>
<div class="abs" style="left:1460px;top:386px;width:0;height:0;border:4px solid transparent;border-top:4px solid #8a8a8a;border-bottom:0"></div>
</body>
</html>
